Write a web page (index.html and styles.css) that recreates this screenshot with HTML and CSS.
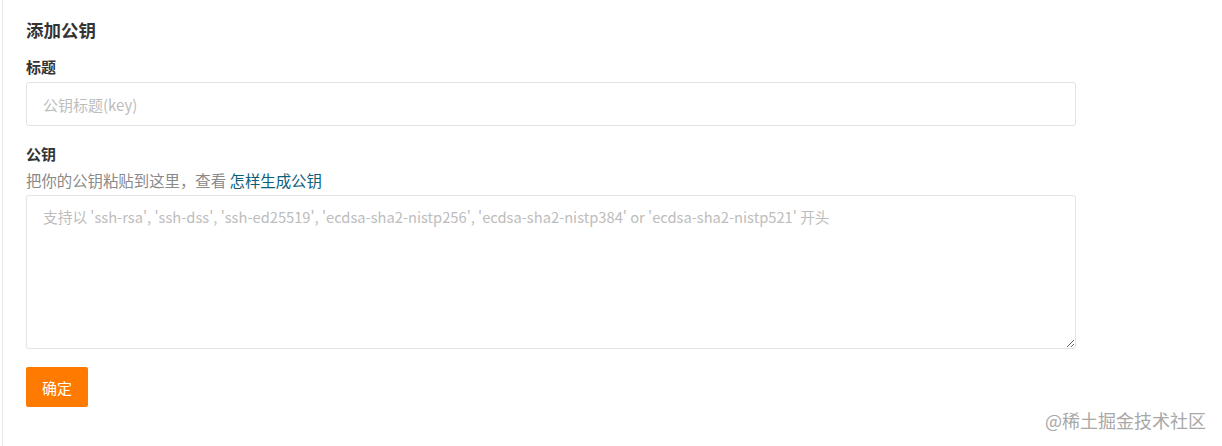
FILE: index.html
```html
<!DOCTYPE html>
<html lang="zh-CN">
<head>
  <meta charset="UTF-8">
  <meta name="viewport" content="width=device-width, initial-scale=1.0">
  <title>添加公钥</title>
  <link rel="stylesheet" href="styles.css">
</head>
<body>
  <div class="page">
    <form class="key-form">
      <h3 class="form-title">添加公钥</h3>

      <div class="field">
        <label class="field-label" for="keyTitle">标题</label>
        <input type="text" id="keyTitle" class="text-input" placeholder="公钥标题(key)">
      </div>

      <div class="field field-key">
        <label class="field-label" for="keyBody">公钥</label>
        <p class="field-help">把你的公钥粘贴到这里，查看 <a href="#" class="help-link">怎样生成公钥</a></p>
        <textarea id="keyBody" class="text-area" placeholder="支持以 'ssh-rsa', 'ssh-dss', 'ssh-ed25519', 'ecdsa-sha2-nistp256', 'ecdsa-sha2-nistp384' or 'ecdsa-sha2-nistp521' 开头"></textarea>
      </div>

      <button type="submit" class="submit-btn">确定</button>
    </form>
  </div>

  <!-- 水印 -->
  <div class="watermark">@稀土掘金技术社区</div>
</body>
</html>
```

FILE: styles.css
```css
body {
  margin: 0;
  background: #fff;
  font-family: "Noto Sans CJK SC", "Noto Sans", sans-serif;
  color: #333;
}
.page {
  width: 1220px;
  height: 446px;
  margin-left: 2px;
  border-left: 1px solid #e6e6e6;
  box-sizing: border-box;
}
.key-form {
  width: 1050px;
  padding: 16px 0 0 23px;
  display: flex;
  flex-direction: column;
}
.form-title {
  margin: 0;
  font-size: 17.5px;
  line-height: 28px;
  font-weight: bold;
  color: #333;
}
.field {
  display: flex;
  flex-direction: column;
}
.field-label {
  margin-top: 13px;
  font-size: 15px;
  line-height: 20px;
  font-weight: bold;
  color: #333;
}
.text-input {
  margin-top: 5px;
  height: 44px;
  padding: 0 16px;
  border: 1px solid #e3e3e3;
  border-radius: 3px;
  box-sizing: border-box;
  font-family: inherit;
  font-size: 15px;
  outline: none;
}
.field-key .field-label {
  margin-top: 18px;
}
.field-help {
  margin: 6px 0 0;
  font-size: 15.4px;
  line-height: 20px;
  color: #8a8a8a;
}
.help-link {
  color: #0c5e7a;
  text-decoration: none;
}
.text-area {
  margin-top: 5px;
  height: 154px;
  padding: 11px 16px;
  border: 1px solid #e3e3e3;
  border-radius: 3px;
  box-sizing: border-box;
  font-family: inherit;
  font-size: 14.7px;
  line-height: 20px;
  outline: none;
}
.text-input::placeholder, .text-area::placeholder {
  color: #bdbdbd;
}
.submit-btn {
  margin-top: 18px;
  width: 62px;
  height: 40px;
  border: none;
  border-radius: 2px;
  background: #ff7a00;
  color: #fff;
  font-family: inherit;
  font-size: 15px;
  cursor: pointer;
}
.watermark {
  position: absolute;
  left: 1045px;
  top: 407px;
  font-size: 18px;
  line-height: 26px;
  color: #a8a8a8;
}
```
